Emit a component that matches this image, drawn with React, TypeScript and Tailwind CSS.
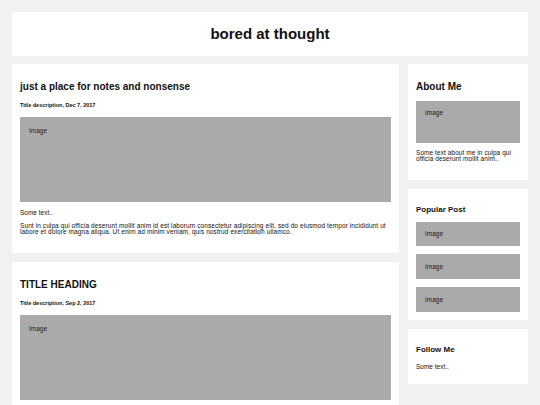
const Img = ({ h, pt }: { h: string; pt: string }) => (
  <div className={`bg-[#aaaaaa] pl-[9px] text-[6.5px] leading-[7px] text-[#222] ${h} ${pt}`}>
    Image
  </div>
);

const Post = ({ title, desc }: { title: string; desc: string }) => (
  <div className="bg-white px-2 pt-[17px] pb-[18px]">
    <h2 className="text-[10px] leading-[12px] font-bold text-[#111]">{title}</h2>
    <h5 className="mt-[9px] text-[5.5px] leading-[6px] font-bold text-[#111]">{desc}</h5>
    <div className="mt-[9px]">
      <Img h="h-[85px]" pt="pt-[10px]" />
    </div>
    <p className="mt-[8px] text-[6.5px] leading-[6px] text-[#111]">Some text..</p>
    <p className="mt-[7px] text-[6.48px] tracking-[0.11px] leading-[6px] text-[#111]">
      Sunt in culpa qui officia deserunt mollit anim id est laborum consectetur adipiscing elit, sed do eiusmod tempor
      incididunt ut labore et dolore magna aliqua. Ut enim ad minim veniam, quis nostrud exercitation ullamco.
    </p>
  </div>
);

const App = () => {
  return (
    <div
      className="min-h-[405px] bg-[#f1f1f1] p-3"
      style={{ fontFamily: '"Liberation Sans", Arial, sans-serif' }}
    >
      <div className="bg-white h-[44px] flex items-center justify-center">
        <h1 className="text-[15px] font-bold text-[#111]">bored at thought</h1>
      </div>

      <div className="flex gap-[9px] mt-2">
        <div className="flex-1 flex flex-col gap-[9px]">
          <Post title="just a place for notes and nonsense" desc="Title description, Dec 7, 2017" />
          <Post title="TITLE HEADING" desc="Title description, Sep 2, 2017" />
        </div>

        <div className="w-[120px] flex flex-col gap-[9px]">
          <div className="bg-white px-2 pt-[17px] pb-[18px]">
            <h2 className="text-[10px] leading-[12px] font-bold text-[#111]">About Me</h2>
            <div className="mt-2">
              <Img h="h-[42px]" pt="pt-[8px]" />
            </div>
            <p className="mt-[7px] text-[6.45px] tracking-[0.1px] leading-[6px] text-[#111]">
              Some text about me in culpa qui officia deserunt mollit anim..
            </p>
          </div>

          <div className="bg-white px-2 pt-[16px] pb-2">
            <h3 className="text-[8px] leading-[9px] font-bold text-[#111]">Popular Post</h3>
            <div className="mt-2 flex flex-col gap-2">
              <div className="bg-[#aaaaaa] h-[24px] pl-[9px] flex items-center text-[6.5px] text-[#222]">Image</div>
              <div className="bg-[#aaaaaa] h-[25px] pl-[9px] flex items-center text-[6.5px] text-[#222]">Image</div>
              <div className="bg-[#aaaaaa] h-[25px] pl-[9px] flex items-center text-[6.5px] text-[#222]">Image</div>
            </div>
          </div>

          <div className="bg-white px-2 pt-[16px] pb-[14px]">
            <h3 className="text-[8px] leading-[9px] font-bold text-[#111]">Follow Me</h3>
            <p className="mt-[10px] text-[6.5px] leading-[6px] text-[#111]">Some text..</p>
          </div>
        </div>
      </div>
    </div>
  );
};

export default App;
